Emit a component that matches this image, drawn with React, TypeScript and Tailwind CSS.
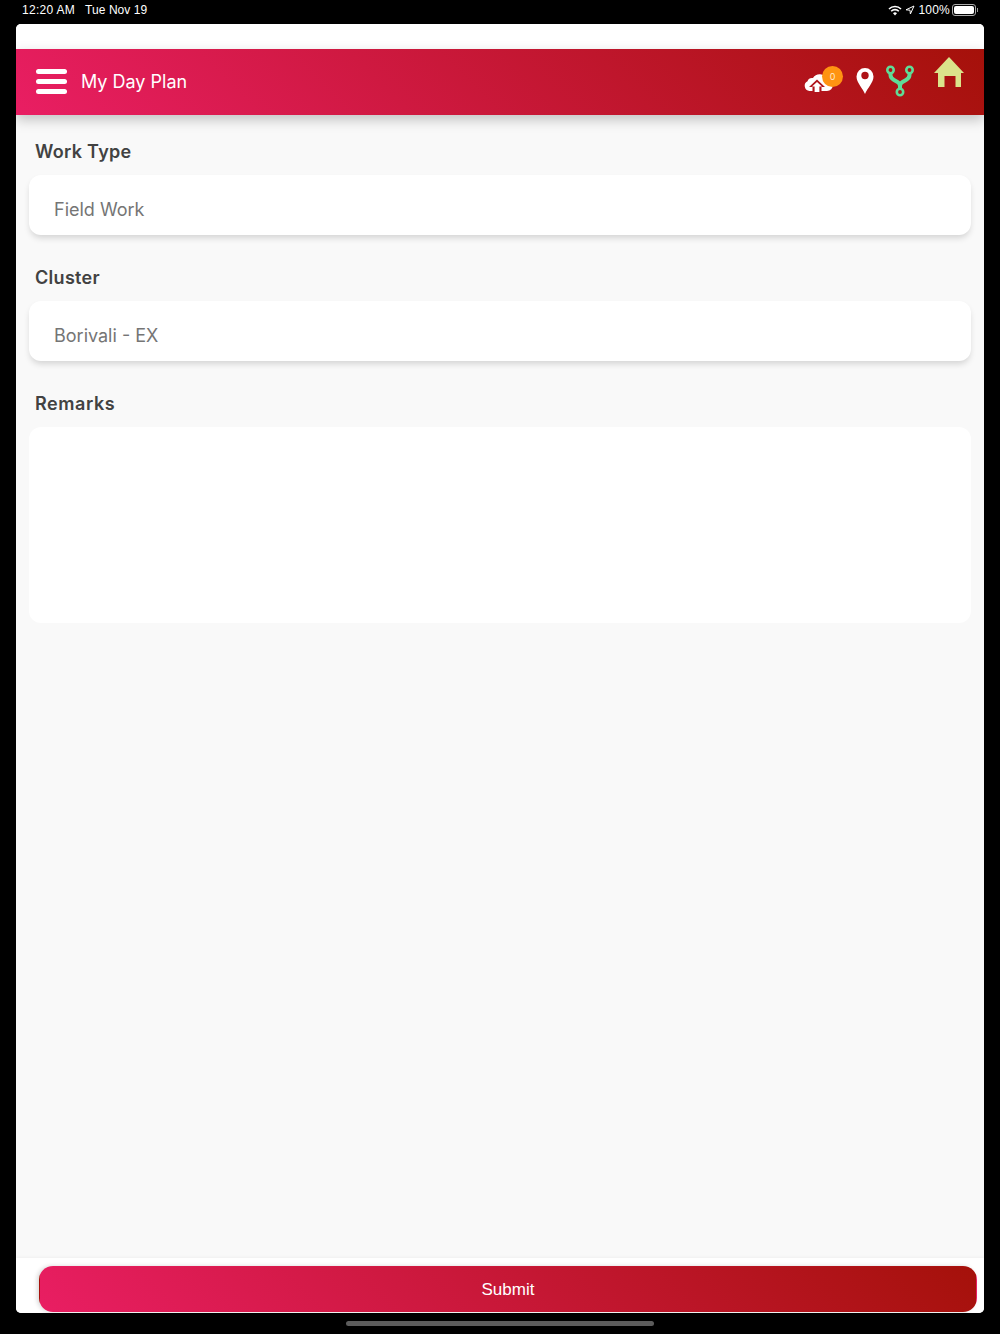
import React from "react";

const poppins = "font-['Inter','Liberation_Sans',sans-serif]";

function StatusBar() {
  return (
    <div className="h-6 flex items-center justify-between pl-[22px] pr-[22px] text-white text-[12px] font-['Liberation_Sans',sans-serif]">
      <div className="flex gap-[10px] pb-[4px]">
        <span className="tracking-[0.3px]">12:20 AM</span>
        <span className="tracking-[0.05px]">Tue Nov 19</span>
      </div>
      <div className="flex items-center pb-[4px]">
        <svg width="14" height="11" viewBox="0 0 14 11" fill="none" stroke="#fff">
          <path d="M1 4 A8.5 8.5 0 0 1 13 4" strokeWidth="1.6" />
          <path d="M3.2 6.2 A5.4 5.4 0 0 1 10.8 6.2" strokeWidth="1.6" />
          <path d="M7 10.5 L5 8.3 A2.9 2.9 0 0 1 9 8.3 Z" fill="#fff" stroke="none" />
        </svg>
        <svg width="10" height="10" viewBox="0 0 10 10" fill="none" stroke="#fff" strokeWidth="1" className="ml-[3px]">
          <path d="M9 1 L1 4.8 L5 5.2 L5.4 9 Z" />
        </svg>
        <span className="ml-[4px] tracking-[0.2px]">100%</span>
        <div className="flex items-center ml-[2px]">
          <div className="w-[24px] h-[12px] border border-[#aaa] rounded-[3px] p-[1px]">
            <div className="w-full h-full bg-white rounded-[2px]" />
          </div>
          <div className="w-[1px] h-[4px] bg-[#999] ml-[1px]" />
        </div>
      </div>
    </div>
  );
}

function Header() {
  return (
    <div className="relative h-[66px] flex items-center bg-[linear-gradient(45deg,#e91e63,#a5110a)] shadow-[0_5px_12px_rgba(0,0,0,0.22)]">
      <div className="ml-[20px] mb-[2px] w-[31px] flex flex-col gap-[5px]">
        <div className="h-[5px] rounded-full bg-white" />
        <div className="h-[5px] rounded-full bg-white" />
        <div className="h-[5px] rounded-full bg-white" />
      </div>
      <span className={`ml-[14px] mb-[2px] text-white text-[18px] ${poppins}`}>My Day Plan</span>
      <div className="ml-auto mr-[20px] self-start mt-[8px] flex items-start">
        <div className="relative mt-[9px] w-[36px] h-[24px]">
          <svg width="29" height="20" viewBox="0 0 29 20" className="absolute left-0 top-[7px]">
            <path d="M5.5 18 A5.2 5.2 0 0 1 3.5 8.2 A5 5 0 0 1 9 5 A8 8 0 0 1 23 6 A6 6 0 0 1 23 18 Z" fill="#fff" />
            <path d="M13 6.5 L21 14 L17.5 14 L17.5 20 L8.5 20 L8.5 14 L5 14 Z" fill="#b0141c" />
            <path d="M13 9 L18 13.4 L15.4 13.4 L15.4 19 L10.6 19 L10.6 13.4 L8 13.4 Z" fill="#fff" />
          </svg>
          <div className={`absolute left-[18px] top-0 w-[21px] h-[21px] rounded-full bg-[#ff9312] text-[#ffe9c9] text-[9px] flex items-center justify-center ${poppins}`}>0</div>
        </div>
        <svg width="18" height="26" viewBox="0 0 18 26" className="ml-[16px] mt-[11px]">
          <path fillRule="evenodd" d="M9 26 C6.5 20 0.5 14.5 0.5 8.5 A8.5 8.5 0 0 1 17.5 8.5 C17.5 14.5 11.5 20 9 26 Z M9 11.2 A3.7 3.7 0 1 0 9 3.8 A3.7 3.7 0 0 0 9 11.2 Z" fill="#fff" />
        </svg>
        <svg width="28" height="32" viewBox="0 0 28 32" fill="none" stroke="#5fdc97" className="ml-[12px] mt-[8px]">
          <circle cx="4.5" cy="5" r="3.2" strokeWidth="2.6" />
          <circle cx="23.5" cy="5" r="3.2" strokeWidth="2.6" />
          <circle cx="14" cy="27" r="3.2" strokeWidth="2.6" />
          <path d="M4.5 8 V10 Q4.5 13 8 15 L11.5 17 Q14 18.5 14 21 V24" strokeWidth="4" />
          <path d="M23.5 8 V10 Q23.5 13 20 15 L16.5 17 Q14 18.5 14 21" strokeWidth="4" />
        </svg>
        <svg width="30" height="30" viewBox="0 0 30 30" className="ml-[20px]">
          <path fillRule="evenodd" d="M15 0 L30 16 L27 16 L27 30 L21.5 30 L21.5 19 L10.5 19 L10.5 30 L4 30 L4 16 L0 16 Z" fill="#dbe38a" />
        </svg>
      </div>
    </div>
  );
}

function Field({ label, value }: { label: string; value: string }) {
  return (
    <div>
      <div className={`ml-[19px] h-[24px] leading-[24px] text-[18px] font-semibold tracking-[0.3px] text-[#424242] ${poppins}`}>{label}</div>
      <div className={`mt-[11px] mx-[13px] h-[60px] rounded-[12px] bg-white shadow-[0_4px_6px_-1px_rgba(0,0,0,0.15)] flex items-center pl-[25px] pt-[9px] text-[18px] text-[#757575] ${poppins}`}>
        {value}
      </div>
    </div>
  );
}

export default function App() {
  return (
    <div className="w-[1000px] h-[1334px] bg-black flex flex-col overflow-hidden">
      <StatusBar />
      <div className="mx-[16px] h-[1289px] rounded-[5px] bg-white overflow-hidden flex flex-col">
        <div className="h-[25px] shrink-0 bg-white" />
        <Header />
        <div className="flex-1 bg-[#f9f9f9] pt-[25px] flex flex-col gap-[31px]">
          <Field label="Work Type" value="Field Work" />
          <Field label="Cluster" value="Borivali - EX" />
          <div>
            <div className={`ml-[19px] h-[24px] leading-[24px] text-[18px] font-semibold tracking-[0.55px] text-[#424242] ${poppins}`}>Remarks</div>
            <div className="mt-[11px] mx-[13px] h-[196px] rounded-[12px] bg-white" />
          </div>
        </div>
        <div className="h-[55px] shrink-0 bg-white pt-[8px] pl-[23px] pr-[7px] shadow-[0_-1px_3px_rgba(0,0,0,0.04)]">
          <div className="h-[46px] rounded-[14px] border border-transparent bg-[linear-gradient(45deg,#e91e63,#a5110a)] flex items-center justify-center pt-[1px] text-white text-[17px] font-['Liberation_Sans',sans-serif] shadow-[-2px_0_4px_rgba(0,0,0,0.15)]">
            Submit
          </div>
        </div>
      </div>
      <div className="flex-1 flex items-start justify-center pt-[8px]">
        <div className="w-[308px] h-[5px] rounded-full bg-[#5c5c5c]" />
      </div>
    </div>
  );
}
